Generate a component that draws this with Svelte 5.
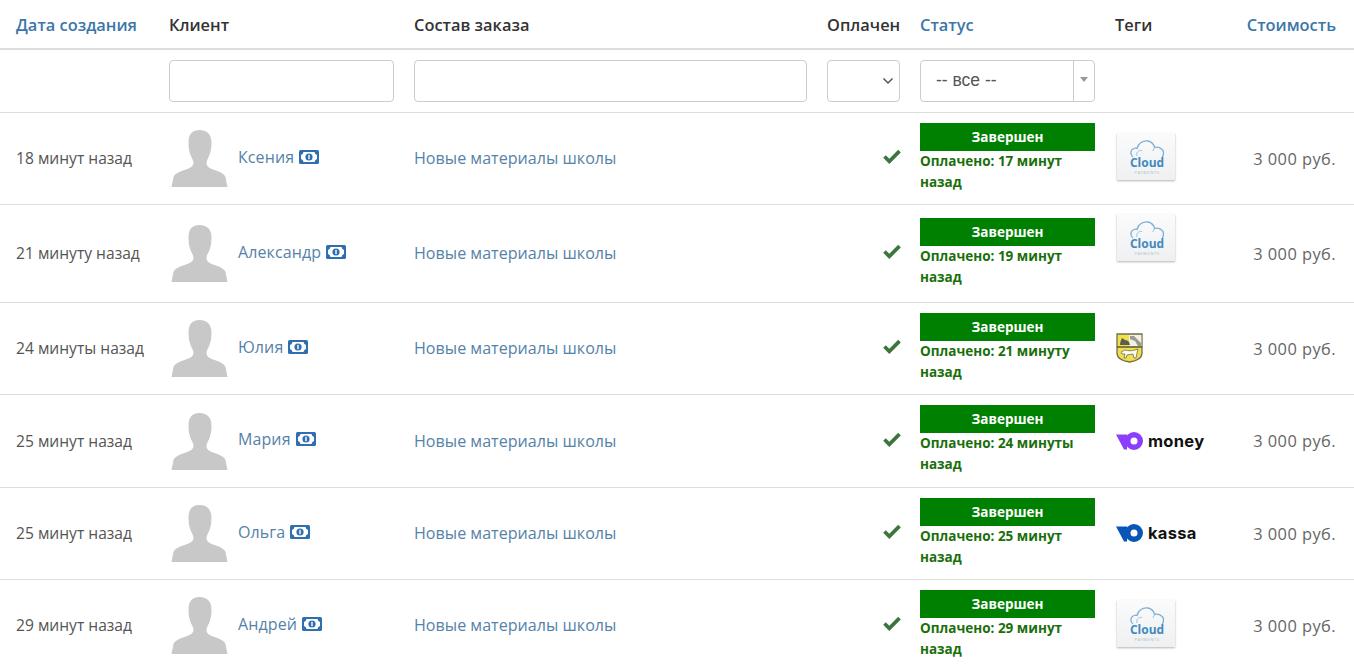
<script lang="ts">
  type Row = {
    created: string;
    name: string;
    paid: string;
    tag: "cloud" | "crest" | "money" | "kassa";
    height: number;
    tall?: boolean;
  };

  const rows: Row[] = [
    { created: "18 минут назад", name: "Ксения", paid: "17 минут", tag: "cloud", height: 92 },
    { created: "21 минуту назад", name: "Александр", paid: "19 минут", tag: "cloud", height: 98, tall: true },
    { created: "24 минуты назад", name: "Юлия", paid: "21 минуту", tag: "crest", height: 92 },
    { created: "25 минут назад", name: "Мария", paid: "24 минуты", tag: "money", height: 93 },
    { created: "25 минут назад", name: "Ольга", paid: "25 минут", tag: "kassa", height: 92 },
    { created: "29 минут назад", name: "Андрей", paid: "29 минут", tag: "cloud", height: 92 }
  ];
</script>

{#snippet yoo(color: string)}
  <svg class="yoo" viewBox="0 0 27 18" aria-hidden="true">
    <path d="M0 2.5h11v15H8z" fill={color} />
    <path fill-rule="evenodd" d="M18 0a9 9 0 1 1 0 18 9 9 0 0 1 0-18zm0 5.500a3.500 3.500 0 1 0 0 7 3.500 3.500 0 0 0 0-7z" fill={color} />
  </svg>
{/snippet}

<div class="page">
  <table>
    <colgroup>
      <col style="width: 159px" />
      <col style="width: 245px" />
      <col style="width: 413px" />
      <col style="width: 93px" />
      <col style="width: 195px" />
      <col style="width: 100px" />
      <col />
    </colgroup>
    <thead>
      <tr class="heads">
        <th class="first link">Дата создания</th>
        <th>Клиент</th>
        <th>Состав заказа</th>
        <th>Оплачен</th>
        <th class="link">Статус</th>
        <th>Теги</th>
        <th class="last link">Стоимость</th>
      </tr>
      <tr class="filters">
        <td></td>
        <td><input type="text" aria-label="Клиент" /></td>
        <td><input type="text" aria-label="Состав заказа" /></td>
        <td>
          <div class="paid-select">
            <svg viewBox="0 0 12 8" aria-hidden="true">
              <path d="M1.500 1.500 6 6l4.500-4.500" fill="none" stroke="#555" stroke-width="1.500" />
            </svg>
          </div>
        </td>
        <td>
          <div class="combo">
            <span class="combo-value">-- все --</span>
            <span class="combo-arrow"><i></i></span>
          </div>
        </td>
        <td></td>
        <td></td>
      </tr>
    </thead>
    <tbody>
      {#each rows as row}
        <tr style="height: {row.height}px">
          <td class="first date">{row.created}</td>
          <td>
            <div class="client">
              <svg class="avatar" viewBox="0 0 56 57" aria-hidden="true">
                <path
                  d="M28 0c8 0 12 5 12 13 0 4-.5 8-2 12-1 3-3 5-3 8 0 3 2 5 8 7 6 2 10 4 11 7l2 10H0l2-10c1-3 5-5 11-7 6-2 9-4 9-7 0-3-2-5-3-8-1.500-4-2-8-2-12C17 5 20 0 28 0z"
                  fill="#c8c8c8"
                />
              </svg>
              <span class="name">{row.name}</span>
              <svg class="cash" viewBox="0 0 20 14" aria-hidden="true">
                <rect width="20" height="14" rx="1.500" fill="#2f6fb0" />
                <path d="M4.500 2h11q.5 2.500 2.500 3v4q-2 .5-2.500 3h-11Q4 9.500 2 9V5q2-.5 2.500-3z" fill="#fff" />
                <circle cx="10" cy="7" r="3.600" fill="#2f6fb0" />
                <rect x="9.300" y="4.800" width="1.400" height="4.400" fill="#fff" />
              </svg>
            </div>
          </td>
          <td class="order">Новые материалы школы</td>
          <td class="paid-cell">
            <svg class="check" viewBox="0 0 20 16" aria-hidden="true">
              <path d="M1.200 8.800 3.800 6.200 7.300 9.700 16.200.8 18.800 3.400 7.300 15z" fill="#3c763d" />
            </svg>
          </td>
          <td>
            <div class="status">Завершен</div>
            <div class="paid-note">Оплачено: {row.paid} назад</div>
          </td>
          <td class="tag-cell">
            {#if row.tag === "cloud"}
              <div class="cloud" class:tall={row.tall}>
                <svg viewBox="0 0 58 47" aria-hidden="true">
                  <path
                    d="M16 24c-3-2-3-7 1-8.500 1-.5 2-.5 3 0 1-5 6-8.500 11-7.500 4 1 6 3.500 6.500 6.500 4-1 8.500 1 9 5 .2 1.500-.3 3-1 4.500"
                    fill="none"
                    stroke="#7fb0d6"
                    stroke-width="1.300"
                  />
                  <path d="M20 23c-1-3 1-6 5-5.500M38 14.500c-1 1-2 2-2 3.500" fill="none" stroke="#9cc4e0" stroke-width="1" />
                  <text x="30" y="34" class="cloud-word">Cloud</text>
                  <text x="30" y="40.500" class="cloud-sub">PAYMENTS</text>
                </svg>
              </div>
            {:else if row.tag === "crest"}
              <svg class="crest" viewBox="0 0 27 30" aria-hidden="true">
                <path d="M1 1h25v19c0 5-6 8-12.500 9C7 28 1 25 1 20z" fill="#f2e04a" stroke="#6f6f55" stroke-width="1.300" />
                <path d="M13 2h12.300v11H13z" fill="#f1f1ea" />
                <path d="M1 14h25" stroke="#4f4f3c" stroke-width="1.400" />
                <path d="M4 12c0-3 1-5 2-7 1 1 2 1 3 2 2 0 3 1 4 2l1 3z" fill="#5e5e50" />
                <path d="M14 3h4l7 7v3h-3l-3-5-5-2z" fill="#9a9a90" />
                <path d="M5 19c1-1 3-1 4-2 3 1 7 1 10 0l3-1-1 4-1 5h-2l-1-4-6 1-1 3H8l1-4-3 0z" fill="#fbfbf4" stroke="#6f6f55" stroke-width=".8" />
              </svg>
            {:else if row.tag === "money"}
              <div class="brand">
                {@render yoo("#8b3ffd")}
                <span>money</span>
              </div>
            {:else}
              <div class="brand kassa">
                {@render yoo("#0a55b8")}
                <span>kassa</span>
              </div>
            {/if}
          </td>
          <td class="last price">3 000 руб.</td>
        </tr>
      {/each}
    </tbody>
  </table>
</div>

<style>
  :global(body) {
    margin: 0;
    background: #fff;
    color: #333;
    font-family: "Open Sans", "Noto Sans", "Liberation Sans", sans-serif;
  }

  .page {
    height: 671px;
    overflow: hidden;
  }

  table {
    width: 1354px;
    table-layout: fixed;
    border-collapse: collapse;
    font-size: 15.6px;
  }

  th {
    height: 49px;
    padding: 0 10px;
    box-sizing: border-box;
    border-bottom: 2px solid #ddd;
    text-align: left;
    font-size: 16.4px;
    font-weight: 600;
    color: #333;
    white-space: nowrap;
  }

  th.link {
    color: #3c76a8;
  }

  td {
    padding: 0 10px;
    border-bottom: 1px solid #ddd;
    vertical-align: middle;
  }

  .first {
    padding-left: 16px;
  }

  .last {
    padding-right: 18px;
    text-align: right;
  }

  .filters td {
    height: 63px;
    padding-top: 1px;
    box-sizing: border-box;
  }

  input,
  .paid-select,
  .combo {
    display: block;
    box-sizing: border-box;
    width: 100%;
    height: 42px;
    margin: 0;
    border: 1px solid #ccc;
    border-radius: 4px;
    background: #fff;
  }

  .paid-select {
    display: flex;
    align-items: center;
    justify-content: flex-end;
    padding-right: 5px;
  }

  .paid-select svg {
    width: 12px;
    height: 8px;
  }

  .combo {
    display: flex;
    width: 175px;
    align-items: stretch;
  }

  .combo-value {
    flex: 1;
    padding-left: 15px;
    line-height: 38px;
    font-family: "Liberation Sans", sans-serif;
    font-size: 17.5px;
    color: #555;
  }

  .combo-arrow {
    display: flex;
    width: 21px;
    justify-content: center;
    padding-top: 16px;
    box-sizing: border-box;
    border-left: 1px solid #ccc;
  }

  .combo-arrow i {
    width: 0;
    height: 0;
    border: 4px solid transparent;
    border-top: 5px solid #999;
    border-bottom: 0;
  }

  .date {
    color: #555;
    white-space: nowrap;
  }

  .price {
    color: #666;
    font-size: 16.4px;
    letter-spacing: 0.45px;
    white-space: nowrap;
  }

  .client {
    display: flex;
    align-items: center;
  }

  .avatar {
    flex: none;
    width: 57px;
    height: 57px;
    margin: 1px 10px 0 2px;
  }

  .name {
    margin-top: -3px;
    color: #5582a8;
    font-size: 16px;
    letter-spacing: 0.1px;
  }

  .cash {
    flex: none;
    width: 20px;
    height: 14px;
    margin: -3px 0 0 5px;
  }

  .order {
    color: #5582a8;
    font-size: 16.1px;
  }

  .paid-cell {
    padding-right: 8px;
    text-align: right;
  }

  .check {
    display: block;
    width: 20px;
    height: 16px;
    margin: 0 0 2px auto;
  }

  .status {
    height: 28px;
    background: #008000;
    color: #fff;
    font-size: 13.5px;
    font-weight: 700;
    line-height: 28px;
    text-align: center;
  }

  .paid-note {
    padding-bottom: 1px;
    color: #1a6f0c;
    font-size: 13.5px;
    font-weight: 700;
    line-height: 21px;
  }

  .tag-cell {
    padding-left: 11px;
  }

  .cloud {
    width: 58px;
    height: 47px;
    margin: 0 0 3px 1px;
    background: linear-gradient(180deg, #fbfbfb, #eef0f2);
    box-shadow: 0 1px 2px #0000004d;
  }

  .cloud.tall {
    margin-bottom: 31px;
  }

  .cloud svg {
    display: block;
    width: 58px;
    height: 47px;
  }

  .cloud-word {
    font-size: 12px;
    font-weight: 700;
    fill: #4489bd;
    text-anchor: middle;
  }

  .cloud-sub {
    font-size: 4px;
    letter-spacing: 0.6px;
    fill: #a8bccb;
    text-anchor: middle;
  }

  .crest {
    display: block;
    width: 27px;
    height: 30px;
  }

  .brand {
    display: flex;
    align-items: center;
    gap: 5px;
    color: #111;
    font-family: "Inter", "Open Sans", sans-serif;
    font-size: 16.5px;
    font-weight: 700;
    letter-spacing: 0.3px;
    line-height: 18px;
  }

  .yoo {
    flex: none;
    width: 27px;
    height: 18px;
  }
</style>
